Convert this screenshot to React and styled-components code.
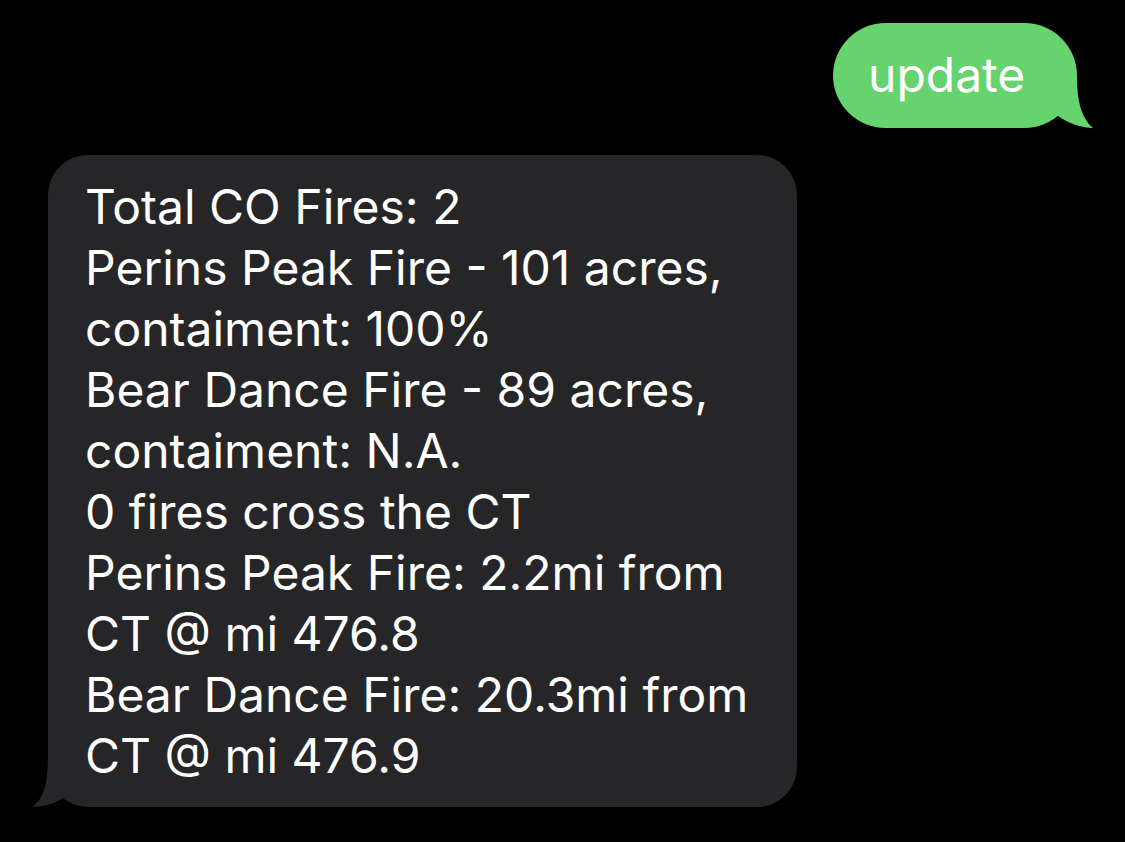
import React from "react";
import styled, { createGlobalStyle } from "styled-components";

const Global = createGlobalStyle`
  html, body { margin: 0; padding: 0; background: #000; }
  body { width: 1125px; height: 842px; overflow: hidden; font-family: Inter, "Noto Sans", sans-serif; }
`;

const Thread = styled.div`
  display: flex;
  flex-direction: column;
  padding: 23px 48px 0 48px;
  gap: 27px;
`;

const Bubble = styled.div`
  position: relative;
  box-sizing: border-box;
  color: #fff;
  font-size: 48px;
  line-height: 61px;
  align-self: ${(p) => (p.$out ? "flex-end" : "flex-start")};
  background: ${(p) => (p.$out ? "#66d36e" : "#262628")};
  border-radius: ${(p) => (p.$out ? "53px" : "40px")};
  width: ${(p) => p.$w}px;
  height: ${(p) => p.$h}px;
  padding: ${(p) => p.$pad};
`;

const Line = styled.div`
  white-space: nowrap;
`;

const Tail = styled.svg`
  position: absolute;
  bottom: 0;
  width: 50px;
  height: 50px;
  ${(p) => (p.$side === "right" ? "right: -16px;" : "left: -16px;")}
  overflow: visible;
`;

const lines = [
  "Total CO Fires: 2",
  "Perins Peak Fire - 101 acres,",
  "contaiment: 100%",
  "Bear Dance Fire - 89 acres,",
  "contaiment: N.A.",
  "0 fires cross the CT",
  "Perins Peak Fire: 2.2mi from",
  "CT @ mi 476.8",
  "Bear Dance Fire: 20.3mi from",
  "CT @ mi 476.9",
];

export default function App() {
  return (
    <>
      <Global />
      <Thread>
        <Bubble $out $w={244} $h={105} $pad="21px 0 0 35px">
          <Line>update</Line>
          <Tail $side="right" viewBox="0 0 50 50">
            <path d="M0,0 L34,0 C34,22 38,40 50,50 C40,50 26,46 15,38 L0,30 Z" fill="#66d36e" />
          </Tail>
        </Bubble>
        <Bubble $w={749} $h={652} $pad="21px 0 0 37px">
          {lines.map((l) => (
            <Line key={l}>{l}</Line>
          ))}
          <Tail $side="left" viewBox="0 0 50 50">
            <path d="M50,0 L16,0 C16,25 12,42 0,50 C10,50 22,47 31,41 L50,35 Z" fill="#262628" />
          </Tail>
        </Bubble>
      </Thread>
    </>
  );
}
